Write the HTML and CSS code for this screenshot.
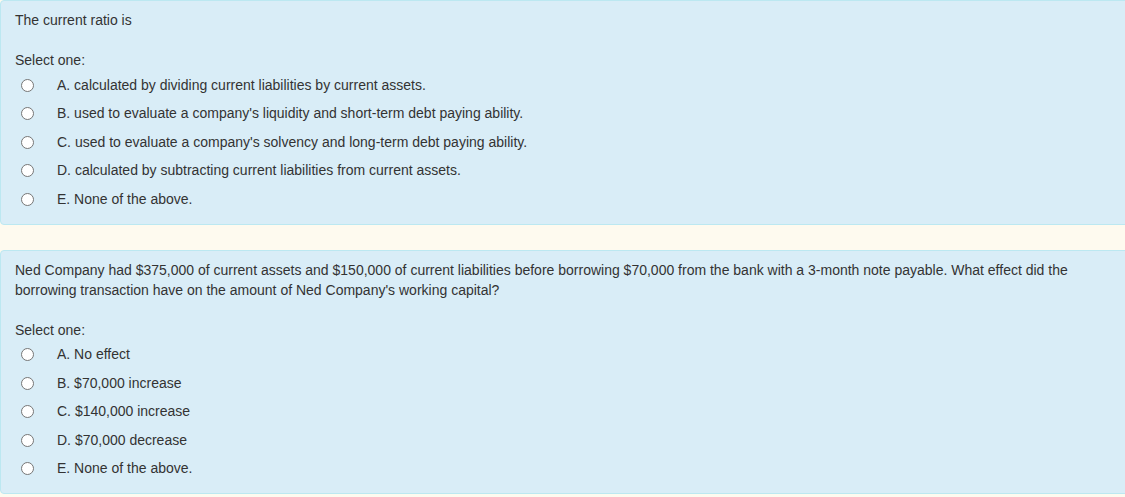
FILE: index.html
```html
<!DOCTYPE html>
<html>
<head>
<meta charset="utf-8">
<link rel="stylesheet" href="styles.css">
</head>
<body>
<div class="page">
  <div class="que">
    <div class="qtext">The current ratio is</div>
    <div class="prompt">Select one:</div>
    <div class="answers">
      <label class="opt"><span class="radio"></span><span class="lbl">A. calculated by dividing current liabilities by current assets.</span></label>
      <label class="opt"><span class="radio"></span><span class="lbl">B. used to evaluate a company's liquidity and short-term debt paying ability.</span></label>
      <label class="opt"><span class="radio"></span><span class="lbl">C. used to evaluate a company's solvency and long-term debt paying ability.</span></label>
      <label class="opt"><span class="radio"></span><span class="lbl">D. calculated by subtracting current liabilities from current assets.</span></label>
      <label class="opt"><span class="radio"></span><span class="lbl">E. None of the above.</span></label>
    </div>
  </div>
  <div class="que">
    <div class="qtext">Ned Company had $375,000 of current assets and $150,000 of current liabilities before borrowing $70,000 from the bank with a 3-month note payable. What effect did the borrowing transaction have on the amount of Ned Company's working capital?</div>
    <div class="prompt">Select one:</div>
    <div class="answers">
      <label class="opt"><span class="radio"></span><span class="lbl">A. No effect</span></label>
      <label class="opt"><span class="radio"></span><span class="lbl">B. $70,000 increase</span></label>
      <label class="opt"><span class="radio"></span><span class="lbl">C. $140,000 increase</span></label>
      <label class="opt"><span class="radio"></span><span class="lbl">D. $70,000 decrease</span></label>
      <label class="opt"><span class="radio"></span><span class="lbl">E. None of the above.</span></label>
    </div>
  </div>
</div>
</body>
</html>
```
FILE: styles.css
```css
html, body {
  margin: 0;
  padding: 0;
  background: #fefaef;
}
body {
  font-family: "Liberation Sans", Arial, sans-serif;
  font-size: 14px;
  line-height: 19px;
  color: #333333;
}
.page {
  display: flex;
  flex-direction: column;
  gap: 25px;
  overflow: hidden;
  width: 1125px;
}
.que {
  background: #d9edf7;
  border: 1px solid #bce8f1;
  border-radius: 4px;
  margin-right: -6px;
  padding: 9px 15px 10px 14px;
}
.qtext {
  padding-right: 30px;
  line-height: 20px;
}
.prompt {
  margin-top: 21px;
}
.answers {
  display: flex;
  flex-direction: column;
  padding-top: 1px;
}
.opt {
  display: flex;
  align-items: center;
  height: 28.5px;
}
.radio {
  width: 11px;
  height: 11px;
  border: 1px solid #767676;
  border-radius: 50%;
  background: #ffffff;
  margin-left: 6px;
  margin-right: 23px;
  flex: none;
}
```
